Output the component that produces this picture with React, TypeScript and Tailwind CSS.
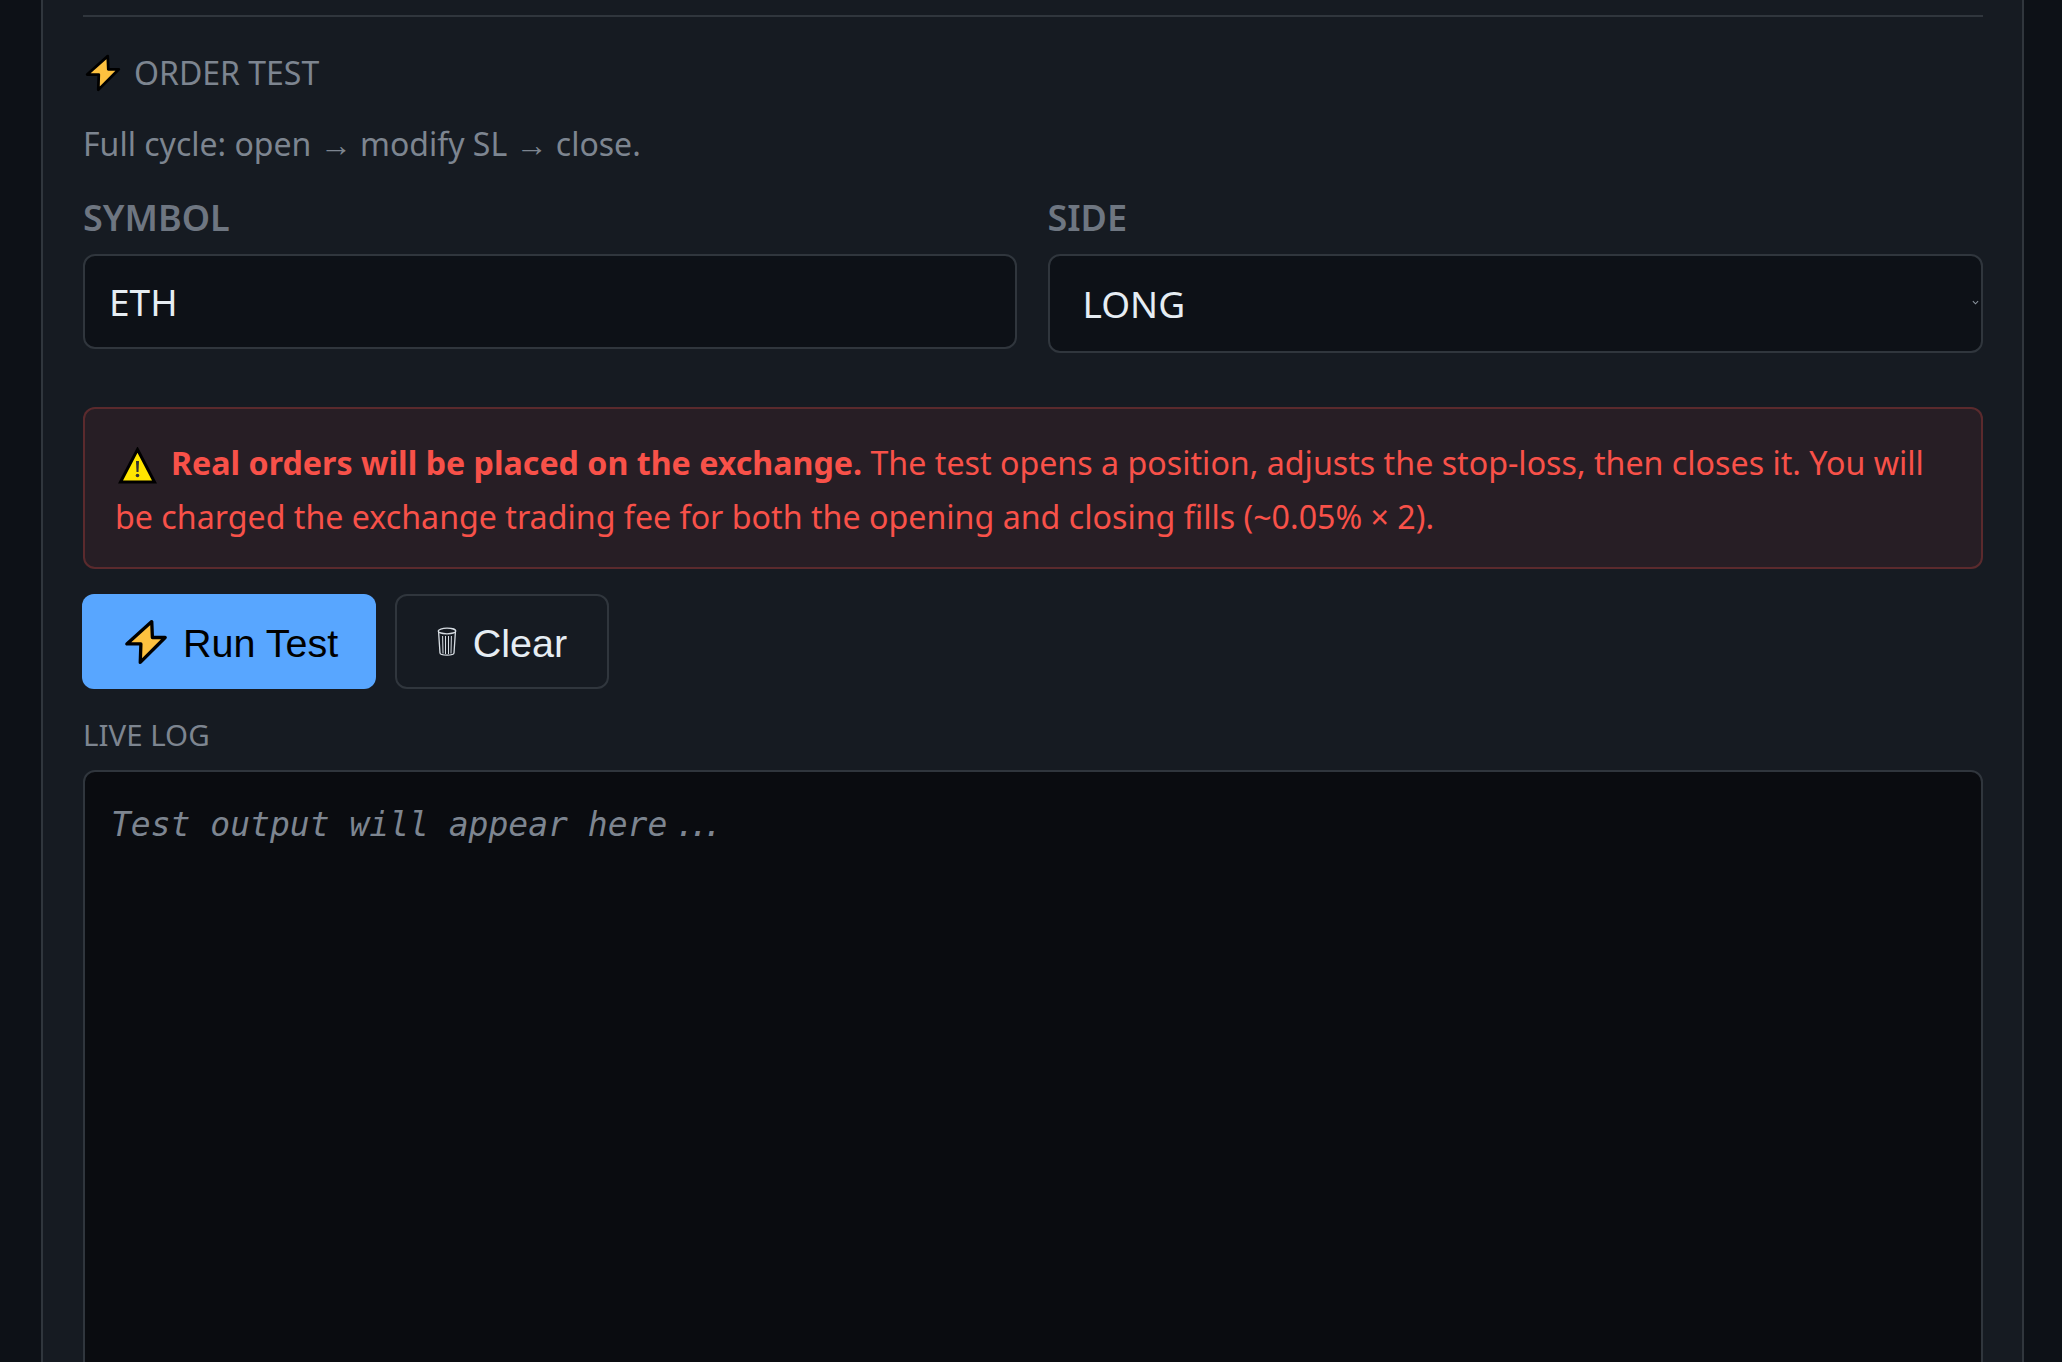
import { useState } from 'react';

function BoltIcon({ className }: { className: string }) {
  return (
    <svg viewBox="1 1 34 36" className={className}>
      <path
        d="M22.5 3 L3 20.5 H14 L13.5 35 L33 15.5 H23 Z"
        fill="#fdc13f"
        stroke="#000"
        strokeWidth="2.6"
        strokeLinejoin="round"
      />
    </svg>
  );
}

function WarnIcon({ className }: { className: string }) {
  return (
    <svg viewBox="0 0 38 37" className={className}>
      <path d="M19 2.5 L36 35 H2 Z" fill="#ffe500" stroke="#000" strokeWidth="3" strokeLinejoin="miter" />
      <path d="M17.5 14 H20.5 L20 25 H18 Z" fill="#333" />
      <circle cx="19" cy="28.5" r="1.8" fill="#333" />
    </svg>
  );
}

function TrashIcon({ className }: { className: string }) {
  return (
    <svg viewBox="0 0 20 30" className={className} fill="none" stroke="#d7dde3" strokeWidth="1.3">
      <ellipse cx="10" cy="4" rx="8.8" ry="2.8" />
      <path d="M1.6 5 L3 26 C3.2 28.8 16.8 28.8 17 26 L18.4 5" />
      <path d="M5.6 9 L6 26.5 M8.5 9 V27 M11.5 9 V27 M14.4 9 L14 26.5" strokeWidth="1" />
    </svg>
  );
}

export default function App() {
  const [symbol, setSymbol] = useState('ETH');
  const [side, setSide] = useState('LONG');
  const ui = { fontFamily: '"Noto Sans", sans-serif' };

  return (
    <div className="h-screen overflow-hidden bg-[#0d1117] pl-[41px] pr-[38px]" style={ui}>
      <div className="h-full border-x-2 border-[#30363d] bg-[#161b22] pl-[40px] pr-[39px] pt-[15px]">
        <div className="border-t-2 border-[#30363d] pt-[36px]">
          {/* Order test header */}
          <div className="flex items-center gap-[13px] h-[40px] text-[32px] text-[#7d8590]">
            <BoltIcon className="w-[36px] h-[38px] ml-[2px]" />
            <span>ORDER TEST</span>
          </div>
          <p className="mt-[31px] h-[40px] leading-[40px] text-[32px] text-[#7d8590]">
            Full cycle: open → modify SL → close.
          </p>

          {/* Form */}
          <div className="mt-[36px] grid grid-cols-[933.5px_minmax(0,1fr)] gap-x-[31px] items-start">
            <div>
              <label className="block h-[35px] leading-[35px] text-[36px] font-semibold text-[#6e7681]">SYMBOL</label>
              <input
                value={symbol}
                onChange={e => setSymbol(e.target.value)}
                className="mt-[19px] w-full h-[95px] rounded-[12px] border-2 border-[#30363d] bg-[#0d1117] px-[24px] text-[37px] text-[#e6edf3] outline-none"
              />
            </div>
            <div>
              <label className="block h-[35px] leading-[35px] text-[36px] font-semibold text-[#6e7681]">SIDE</label>
              <div className="relative mt-[19px]">
                <select
                  value={side}
                  onChange={e => setSide(e.target.value)}
                  className="w-full h-[99px] appearance-none rounded-[12px] border-2 border-[#30363d] bg-[#0d1117] pl-[33px] text-[37px] text-[#e6edf3] outline-none"
                >
                  <option>LONG</option>
                  <option>SHORT</option>
                </select>
                <svg viewBox="0 0 8 5" className="absolute right-[4px] top-[46px] w-[7px] h-[5px]" fill="none" stroke="#8b949e" strokeWidth="1.2">
                  <path d="M1 1 L4 4 L7 1" />
                </svg>
              </div>
            </div>
          </div>

          {/* Warning */}
          <div className="mt-[54px] rounded-[12px] border-2 border-[#f8514940] bg-[#f8514914] px-[30px] pt-[27px] pb-[23px] text-[32.2px] leading-[54px] text-[#f85149]">
            <WarnIcon className="inline-block w-[39px] h-[37px] ml-[3px] mr-[14px] align-[-9px]" />
            <strong className="font-bold">Real orders will be placed on the exchange.</strong>{' '}
            The test opens a position, adjusts the stop-loss, then closes it. You will be charged the exchange trading fee for both the opening and closing fills (~0.05% × 2).
          </div>

          {/* Actions */}
          <div className="mt-[25px] -ml-px flex gap-[19px]" style={{ fontFamily: '"Liberation Sans", sans-serif' }}>
            <button className="flex items-center h-[95px] w-[294px] pl-[41px] gap-[14px] rounded-[12px] bg-[#58a6ff] text-[39.5px] text-[#000]">
              <BoltIcon className="w-[46px] h-[46px]" />
              <span className="pt-[5px]">Run Test</span>
            </button>
            <button className="flex items-center h-[95px] w-[214px] justify-center gap-[16px] rounded-[12px] border-2 border-[#30363d] text-[39.5px] text-[#e6edf3]">
              <TrashIcon className="w-[20px] h-[30px]" />
              <span className="pt-[5px]">Clear</span>
            </button>
          </div>

          {/* Live log */}
          <div className="mt-[29px] h-[34px] leading-[34px] text-[29.5px] text-[#7d8590]">LIVE LOG</div>
          <div
            className="mt-[18px] h-[800px] rounded-[12px] border-2 border-[#30363d] bg-[#0a0c10] px-[26px] py-[28px] text-[33px] italic text-[#7d8590]"
            style={{ fontFamily: '"DejaVu Sans Mono", monospace' }}
          >
            Test output will appear here<span className="ml-[8px] tracking-[-6px]">...</span>
          </div>
        </div>
      </div>
    </div>
  );
}
